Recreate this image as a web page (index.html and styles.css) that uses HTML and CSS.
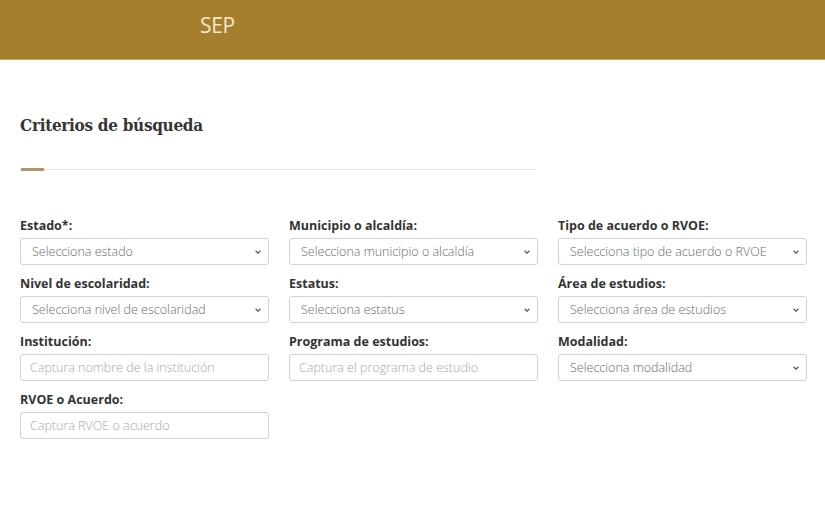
FILE: index.html
```html
<!DOCTYPE html>
<html lang="es">
<head>
<meta charset="utf-8">
<title>SEP - Criterios de búsqueda</title>
<link rel="stylesheet" href="styles.css">
</head>
<body>
<header class="topbar">
  <div class="brand">SEP</div>
</header>
<main class="content">
  <h2 class="title">Criterios de búsqueda</h2>
  <div class="divider"><span class="accent"></span></div>
  <form class="grid">
    <div class="field">
      <label>Estado*:</label>
      <div class="select"><span>Selecciona estado</span><svg viewBox="0 0 10 10" class="chev"><path d="M2 3.5 L5 6.5 L8 3.5" /></svg></div>
    </div>
    <div class="field">
      <label>Municipio o alcaldía:</label>
      <div class="select"><span>Selecciona municipio o alcaldía</span><svg viewBox="0 0 10 10" class="chev"><path d="M2 3.5 L5 6.5 L8 3.5" /></svg></div>
    </div>
    <div class="field">
      <label>Tipo de acuerdo o RVOE:</label>
      <div class="select"><span>Selecciona tipo de acuerdo o RVOE</span><svg viewBox="0 0 10 10" class="chev"><path d="M2 3.5 L5 6.5 L8 3.5" /></svg></div>
    </div>
    <div class="field">
      <label>Nivel de escolaridad:</label>
      <div class="select"><span>Selecciona nivel de escolaridad</span><svg viewBox="0 0 10 10" class="chev"><path d="M2 3.5 L5 6.5 L8 3.5" /></svg></div>
    </div>
    <div class="field">
      <label>Estatus:</label>
      <div class="select"><span>Selecciona estatus</span><svg viewBox="0 0 10 10" class="chev"><path d="M2 3.5 L5 6.5 L8 3.5" /></svg></div>
    </div>
    <div class="field">
      <label>Área de estudios:</label>
      <div class="select"><span>Selecciona área de estudios</span><svg viewBox="0 0 10 10" class="chev"><path d="M2 3.5 L5 6.5 L8 3.5" /></svg></div>
    </div>
    <div class="field">
      <label>Institución:</label>
      <input class="input" type="text" placeholder="Captura nombre de la institución">
    </div>
    <div class="field">
      <label>Programa de estudios:</label>
      <input class="input" type="text" placeholder="Captura el programa de estudio">
    </div>
    <div class="field">
      <label>Modalidad:</label>
      <div class="select"><span>Selecciona modalidad</span><svg viewBox="0 0 10 10" class="chev"><path d="M2 3.5 L5 6.5 L8 3.5" /></svg></div>
    </div>
    <div class="field">
      <label>RVOE o Acuerdo:</label>
      <input class="input" type="text" placeholder="Captura RVOE o acuerdo">
    </div>
  </form>
</main>
</body>
</html>
```

FILE: styles.css
```css
* { box-sizing: border-box; }
html, body { margin: 0; padding: 0; background: #fff; }
body { font-family: "Open Sans", "Noto Sans", sans-serif; color: #333; }

.topbar {
  height: 60px;
  background: #a57f2c;
  border-bottom: 1px solid #c9ad6f;
  display: flex;
  align-items: center;
  padding-left: 200px;
}
.brand {
  color: #f6e8cc;
  font-size: 21px;
  font-weight: 400;
  letter-spacing: -0.3px;
  margin-top: -10px;
}

.content {
  padding: 0 19px 0 20px;
}
.title {
  margin: 53px 0 0;
  font-family: "DejaVu Serif", "Liberation Serif", serif;
  font-stretch: condensed;
  font-size: 17px;
  font-weight: bold;
  color: #353535;
  line-height: 24px;
  letter-spacing: -0.3px;
}
.divider {
  width: 516px;
  height: 1px;
  background: #e8e8e8;
  margin-top: 32px;
  position: relative;
}
.accent {
  position: absolute;
  left: 1px;
  top: -1px;
  width: 23px;
  height: 3px;
  background: #b49466;
}

.grid {
  margin-top: 47px;
  display: grid;
  grid-template-columns: repeat(3, 249px);
  column-gap: 20px;
  row-gap: 10px;
}
.field { display: flex; flex-direction: column; }
.field label {
  font-size: 12.5px;
  font-weight: 700;
  line-height: 18px;
  color: #333;
  margin-bottom: 3px;
}
.select, .input {
  height: 27px;
  border: 1px solid #d2d2d2;
  border-radius: 3px;
  background: #fff;
  font-family: "Open Sans", "Noto Sans", sans-serif;
  font-size: 12.5px;
  font-weight: 300;
}
.select {
  display: flex;
  align-items: center;
  justify-content: space-between;
  padding: 0 6px 0 11px;
  color: #6a6a6a;
}
.chev {
  width: 8px;
  height: 8px;
  fill: none;
  stroke: #666;
  stroke-width: 1.8;
}
.input {
  width: 100%;
  padding: 0 9px;
  outline: none;
  color: #333;
}
.input::placeholder { color: #a8a8a8; font-weight: 300; }
```
